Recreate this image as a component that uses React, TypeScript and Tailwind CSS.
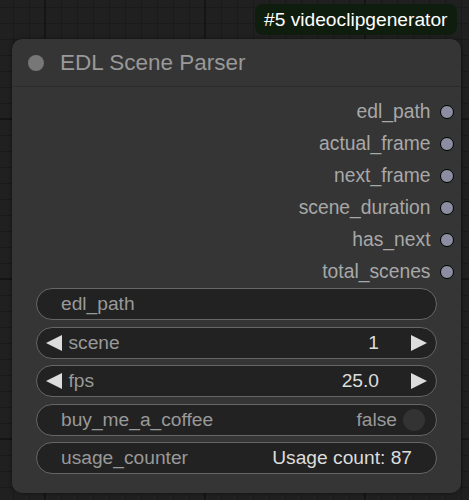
import React from "react";

const OUTPUTS = ["edl_path", "actual_frame", "next_frame", "scene_duration", "has_next", "total_scenes"];

function Arrow({ dir }: { dir: "left" | "right" }) {
  return (
    <svg width="16" height="16" viewBox="0 0 16 16" className="shrink-0">
      {dir === "left" ? (
        <polygon points="16,0 16,16 0,8" fill="#dddddd" />
      ) : (
        <polygon points="0,0 0,16 16,8" fill="#dddddd" />
      )}
    </svg>
  );
}

function Pill({ children }: { children: React.ReactNode }) {
  return (
    <div className="h-[32px] rounded-full bg-[#222222] border-[1.5px] border-[#666666] flex items-center text-[19.2px] leading-none">
      {children}
    </div>
  );
}

function NumberWidget({ label, value }: { label: string; value: string }) {
  return (
    <Pill>
      <div className="pl-[9px]">
        <Arrow dir="left" />
      </div>
      <span className="ml-[6.5px] text-[#999999]">{label}</span>
      <span className="ml-auto text-[#dddddd]">{value}</span>
      <div className="ml-[32px] pr-[9px]">
        <Arrow dir="right" />
      </div>
    </Pill>
  );
}

export default function App() {
  return (
    <div
      className="relative w-[469px] h-[500px] overflow-hidden bg-[#202020] bg-[linear-gradient(to_right,#151515_2px,transparent_2px),linear-gradient(to_bottom,#151515_2px,transparent_2px),linear-gradient(to_right,#1a1a1a_1px,transparent_1px),linear-gradient(to_bottom,#1a1a1a_1px,transparent_1px)] bg-[size:160px_160px,160px_160px,16px_16px,16px_16px] bg-[position:44px_118px,44px_118px,13px_7px,13px_7px]"
      style={{ fontFamily: '"Liberation Sans", Arial, sans-serif' }}
    >
      {/* badge over the node */}
      <div className="absolute left-[255px] top-[4px] w-[202px] h-[31px] rounded-[8px] bg-[#0f1d0f] flex items-center pl-[9px] text-[19.2px] leading-none text-white">
        #5 videoclipgenerator
      </div>

      <div className="absolute left-[12px] top-[39px] w-[449px] h-[454px] rounded-[10px] bg-[#353535] shadow-[0_0_4px_rgba(0,0,0,0.4)] flex flex-col">
        <div className="h-[48px] flex items-center border-b border-[#2c2c2c] shrink-0">
          <div className="ml-[16px] w-[16px] h-[16px] rounded-full bg-[#777777]" />
          <span className="ml-[16px] mt-[2px] text-[22.5px] leading-none text-[#999999]">EDL Scene Parser</span>
        </div>

        <div className="pt-[9px] flex flex-col">
          {OUTPUTS.map((o) => (
            <div key={o} className="h-[32px] flex items-center justify-end pr-[7px]">
              <span className="text-[19.3px] leading-none text-[#a8a8a8]">{o}</span>
              <div className="ml-[9.5px] w-[14px] h-[14px] rounded-full bg-[#8d8da2] border-[1.5px] border-black" />
            </div>
          ))}
        </div>

        <div className="px-[24px] flex flex-col gap-[6.5px]">
          <Pill>
            <span className="pl-[24px] text-[#999999]">edl_path</span>
          </Pill>
          <NumberWidget label="scene" value="1" />
          <NumberWidget label="fps" value="25.0" />
          <Pill>
            <span className="pl-[24px] text-[#999999]">buy_me_a_coffee</span>
            <span className="ml-auto text-[#999999]">false</span>
            <div className="ml-[6px] mr-[11px] w-[22px] h-[22px] rounded-full bg-[#333333]" />
          </Pill>
          <Pill>
            <span className="pl-[24px] text-[#999999]">usage_counter</span>
            <span className="ml-auto pr-[24px] text-[#dddddd]">Usage count: 87</span>
          </Pill>
        </div>
      </div>
    </div>
  );
}
